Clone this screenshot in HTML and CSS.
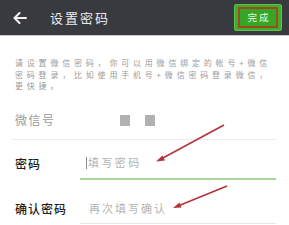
FILE: index.html
```html
<!DOCTYPE html>
<html lang="zh-CN">
<head>
<meta charset="utf-8">
<title>设置密码</title>
<link rel="stylesheet" href="styles.css">
</head>
<body>
<div class="page">
  <header class="header">
    <svg class="back" width="14" height="12" viewBox="0 0 14 12"><path d="M13 6H1.5M6.5 1L1.5 6L6.5 11" fill="none" stroke="#f2f2f2" stroke-width="2" stroke-linecap="round" stroke-linejoin="round"/></svg>
    <span class="title">设置密码</span>
    <div class="done-wrap"><span class="done">完成</span></div>
  </header>
  <p class="desc">请设置微信密码，你可以用微信绑定的帐号+微信<br>密码登录，比如使用手机号+微信密码登录微信，<br>更快捷。</p>
  <div class="row row-id">
    <span class="label label-muted">微信号</span>
    <span class="value"><i class="sq"></i><i class="sq"></i></span>
  </div>
  <div class="row row-pwd">
    <span class="label">密码</span>
    <span class="field field-active"><i class="cursor"></i><span class="ph">填写密码</span></span>
  </div>
  <div class="row row-confirm">
    <span class="label">确认密码</span>
    <span class="field"><span class="ph ph2">再次填写确认</span></span>
  </div>
  <svg class="marks" width="289" height="225" viewBox="0 0 289 225">
    <line x1="224" y1="125" x2="161" y2="159" stroke="#b3333a" stroke-width="1.6"/>
    <polygon points="156,161.5 162.5,155.5 165,160.5" fill="#b3333a"/>
    <line x1="227" y1="186" x2="178" y2="206" stroke="#b3333a" stroke-width="1.6"/>
    <polygon points="173,208 179.5,202.5 181.5,207.5" fill="#b3333a"/>
  </svg>
</div>
</body>
</html>
```

FILE: styles.css
```css
html, body {
  margin: 0;
  padding: 0;
  background: #ffffff;
}
.page {
  position: relative;
  width: 289px;
  height: 225px;
  overflow: hidden;
  font-family: "Noto Sans CJK SC", "Noto Sans", sans-serif;
}
.header {
  height: 35px;
  background: #393a3f;
  border-bottom: 1px solid #c9c9c9;
  display: flex;
  align-items: center;
  padding: 0 7px 0 13px;
  box-sizing: content-box;
}
.back {
  display: block;
  flex: none;
}
.title {
  margin-left: 23px;
  color: #ececec;
  font-size: 13px;
  letter-spacing: 2px;
  line-height: 1;
}
.done-wrap {
  margin-left: auto;
  width: 48px;
  height: 27px;
  background: #3fae2f;
  border-radius: 3px;
  display: flex;
  align-items: center;
  justify-content: center;
  box-shadow: inset 0 0 0 1px #58c44a;
}
.done {
  width: 36px;
  height: 17px;
  border: 2px solid #a3471e;
  background: #36a628;
  color: #e9f6e2;
  font-size: 9.5px;
  letter-spacing: 2px;
  text-indent: 2px;
  display: flex;
  align-items: center;
  justify-content: center;
  line-height: 1;
}
.desc {
  margin: 21px 0 10px;
  padding: 0 10px 0 15px;
  font-size: 8px;
  line-height: 11.5px;
  letter-spacing: 3.8px;
  color: #9a9a9a;
  white-space: nowrap;
}
.row {
  display: flex;
  padding: 0 13px 0 15px;
}
.label {
  width: 65px;
  flex: none;
  display: flex;
  align-items: center;
  font-size: 12px;
  letter-spacing: 1px;
  color: #1e1e1e;
  font-weight: 500;
  line-height: 1;
}
.label-muted {
  color: #9b9b9b;
  font-weight: 400;
  letter-spacing: 1.5px;
}
.row-id {
  height: 37px;
  margin: 0 13px 0 12px;
  padding: 0 0 0 3px;
  border-bottom: 1px solid #ededed;
}
.value {
  display: flex;
  align-items: center;
  gap: 15px;
  padding-left: 40px;
}
.sq {
  display: block;
  width: 10px;
  height: 11px;
  background: #b1b1b1;
}
.field {
  flex: 1;
  display: flex;
  align-items: center;
  border-bottom: 1px solid #e6e6e6;
}
.row-pwd {
  padding-top: 8px;
}
.row-pwd .field {
  height: 30px;
  border-bottom: 2px solid #a9d59b;
}
.row-confirm {
  padding-top: 15px;
}
.row-confirm .field {
  height: 28px;
}
.cursor {
  display: block;
  width: 1px;
  height: 12px;
  background: #8a8a8a;
  margin-left: 6px;
  margin-right: 1px;
}
.ph {
  font-size: 11px;
  letter-spacing: 2.4px;
  color: #b4b4b4;
  line-height: 1;
}
.ph2 {
  margin-left: 9px;
  letter-spacing: 2px;
}
.marks {
  position: absolute;
  left: 0;
  top: 0;
  pointer-events: none;
}
```
